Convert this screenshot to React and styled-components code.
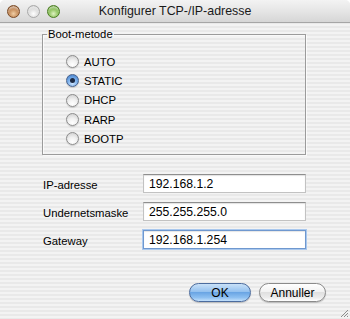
import * as React from "react";
import styled, { createGlobalStyle } from "styled-components";

const GlobalStyle = createGlobalStyle`
  html, body {
    margin: 0;
    padding: 0;
    background: #ffffff;
  }
  * {
    box-sizing: border-box;
  }
`;

const Window = styled.div`
  position: relative;
  width: 350px;
  height: 319px;
  display: flex;
  flex-direction: column;
  border-radius: 5px 5px 0 0;
  overflow: hidden;
  font-family: "Liberation Sans", Arial, sans-serif;
  color: #000;
  background: repeating-linear-gradient(
    to bottom,
    #f3f3f3 0px,
    #f3f3f3 2px,
    #e9e9e9 2px,
    #e9e9e9 4px
  );
`;

const TitleBar = styled.div`
  height: 23px;
  flex: none;
  display: grid;
  grid-template-columns: 1fr auto 1fr;
  align-items: center;
  padding: 0 7px;
  background: linear-gradient(to bottom, #f3f3f3 0%, #e4e4e4 55%, #d6d6d6 100%);
  border-bottom: 1px solid #a6a6a6;
`;

const Lights = styled.div`
  display: flex;
  gap: 7px;
  align-items: center;
`;

const lightColors = {
  close: ["#f1cfa6", "#b97a46", "#7a4a26"],
  min: ["#ffffff", "#d6d6d6", "#a9a9a9"],
  zoom: ["#dff3c2", "#79b543", "#4a7d22"],
};

const Light = styled.span`
  width: 13px;
  height: 13px;
  border-radius: 50%;
  background: ${({ $kind }) =>
    `radial-gradient(circle at 50% 70%, ${lightColors[$kind][0]} 0%, ${lightColors[$kind][1]} 60%, ${lightColors[$kind][2]} 100%)`};
  border: 1px solid ${({ $kind }) => lightColors[$kind][2]};
  box-shadow: inset 0 2px 2px rgba(255, 255, 255, 0.55);
`;

const Title = styled.div`
  font-size: 12.4px;
  color: #1a1a1a;
  white-space: nowrap;
`;

const Body = styled.div`
  flex: 1;
  display: flex;
  flex-direction: column;
  padding: 5px 44px 0 42px;
`;

const Group = styled.fieldset`
  margin: 0;
  height: 127px;
  padding: 12px 0 0 23px;
  border: 1px solid #9b9b9b;
  box-shadow: inset 1px 1px 0 rgba(255, 255, 255, 0.7), 1px 1px 0 rgba(255, 255, 255, 0.7);
  display: flex;
  flex-direction: column;
`;

const Legend = styled.legend`
  font-size: 11.3px;
  padding: 0 1px;
  margin-left: -19px;
`;

const RadioRow = styled.label`
  height: 19.3px;
  display: flex;
  align-items: center;
  gap: 5px;
  font-size: 11.3px;
`;

const RadioDot = styled.span`
  width: 13px;
  height: 13px;
  border-radius: 50%;
  display: flex;
  align-items: center;
  justify-content: center;
  border: 1px solid ${({ $on }) => ($on ? "#48628c" : "#8c8c8c")};
  background: ${({ $on }) =>
    $on
      ? "radial-gradient(circle at 50% 75%, #cfe6ff 0%, #6ea6e6 55%, #3f77c2 100%)"
      : "radial-gradient(circle at 50% 80%, #ffffff 0%, #f0f0f0 45%, #c9c9c9 100%)"};
  box-shadow: 0 1px 1px rgba(0, 0, 0, 0.15);

  &::after {
    content: "";
    display: ${({ $on }) => ($on ? "block" : "none")};
    width: 5px;
    height: 5px;
    border-radius: 50%;
    background: #1c2a44;
  }
`;

const Fields = styled.div`
  margin-top: 19px;
  display: grid;
  grid-template-columns: 101px 1fr;
  row-gap: 9px;
  align-items: center;
`;

const FieldLabel = styled.span`
  font-size: 11.3px;
  padding-left: 1px;
  padding-top: 2px;
`;

const Input = styled.div`
  height: 19px;
  background: #fff;
  font-size: 12.2px;
  display: flex;
  align-items: center;
  padding-left: 5px;
  border: 1px solid ${({ $focus }) => ($focus ? "#6f98cf" : "#c2c2c2")};
  border-top-color: ${({ $focus }) => ($focus ? "#6f98cf" : "#8e8e8e")};
  box-shadow: ${({ $focus }) =>
    $focus ? "0 0 0 1px #a9c8ee, inset 0 1px 1px rgba(0,0,0,0.1)" : "inset 0 1px 1px rgba(0,0,0,0.12)"};
`;

const Footer = styled.div`
  margin-top: auto;
  display: flex;
  justify-content: flex-end;
  gap: 8px;
  padding: 0 24px 17px 0;
`;

const Button = styled.div`
  height: 19px;
  width: ${({ $w }) => $w}px;
  border-radius: 10px;
  display: flex;
  align-items: center;
  justify-content: center;
  font-size: 12px;
  border: 1px solid ${({ $primary }) => ($primary ? "#4c6c9e" : "#8a8a8a")};
  background: ${({ $primary }) =>
    $primary
      ? "linear-gradient(to bottom, #c9e1f8 0%, #94c1ef 45%, #6aa5e4 50%, #8ec0f1 80%, #c4e0fb 100%)"
      : "linear-gradient(to bottom, #ffffff 0%, #f2f2f2 45%, #e0e0e0 50%, #ececec 80%, #ffffff 100%)"};
  box-shadow: 0 1px 1px rgba(0, 0, 0, 0.2);
`;

const Grip = styled.svg`
  position: absolute;
  right: 1px;
  bottom: 1px;
`;

const modes = ["AUTO", "STATIC", "DHCP", "RARP", "BOOTP"];

const fields = [
  { label: "IP-adresse", value: "192.168.1.2" },
  { label: "Undernetsmaske", value: "255.255.255.0" },
  { label: "Gateway", value: "192.168.1.254", focus: true },
];

export default function App() {
  return (
    <>
      <GlobalStyle />
      <Window>
        <TitleBar>
          <Lights>
            <Light $kind="close" />
            <Light $kind="min" />
            <Light $kind="zoom" />
          </Lights>
          <Title>Konfigurer TCP-/IP-adresse</Title>
          <span />
        </TitleBar>

        <Body>
          <Group>
            <Legend>Boot-metode</Legend>
            {modes.map((m) => (
              <RadioRow key={m}>
                <RadioDot $on={m === "STATIC"} />
                {m}
              </RadioRow>
            ))}
          </Group>

          <Fields>
            {fields.map((f) => (
              <React.Fragment key={f.label}>
                <FieldLabel>{f.label}</FieldLabel>
                <Input $focus={f.focus}>{f.value}</Input>
              </React.Fragment>
            ))}
          </Fields>
        </Body>

        <Footer>
          <Button $primary $w={62}>OK</Button>
          <Button $w={67}>Annuller</Button>
        </Footer>

        <Grip width="10" height="10" viewBox="0 0 10 10">
          <path d="M9 2 L2 9 M9 5 L5 9 M9 8 L8 9" stroke="#8c8c8c" strokeWidth="1" />
        </Grip>
      </Window>
    </>
  );
}
